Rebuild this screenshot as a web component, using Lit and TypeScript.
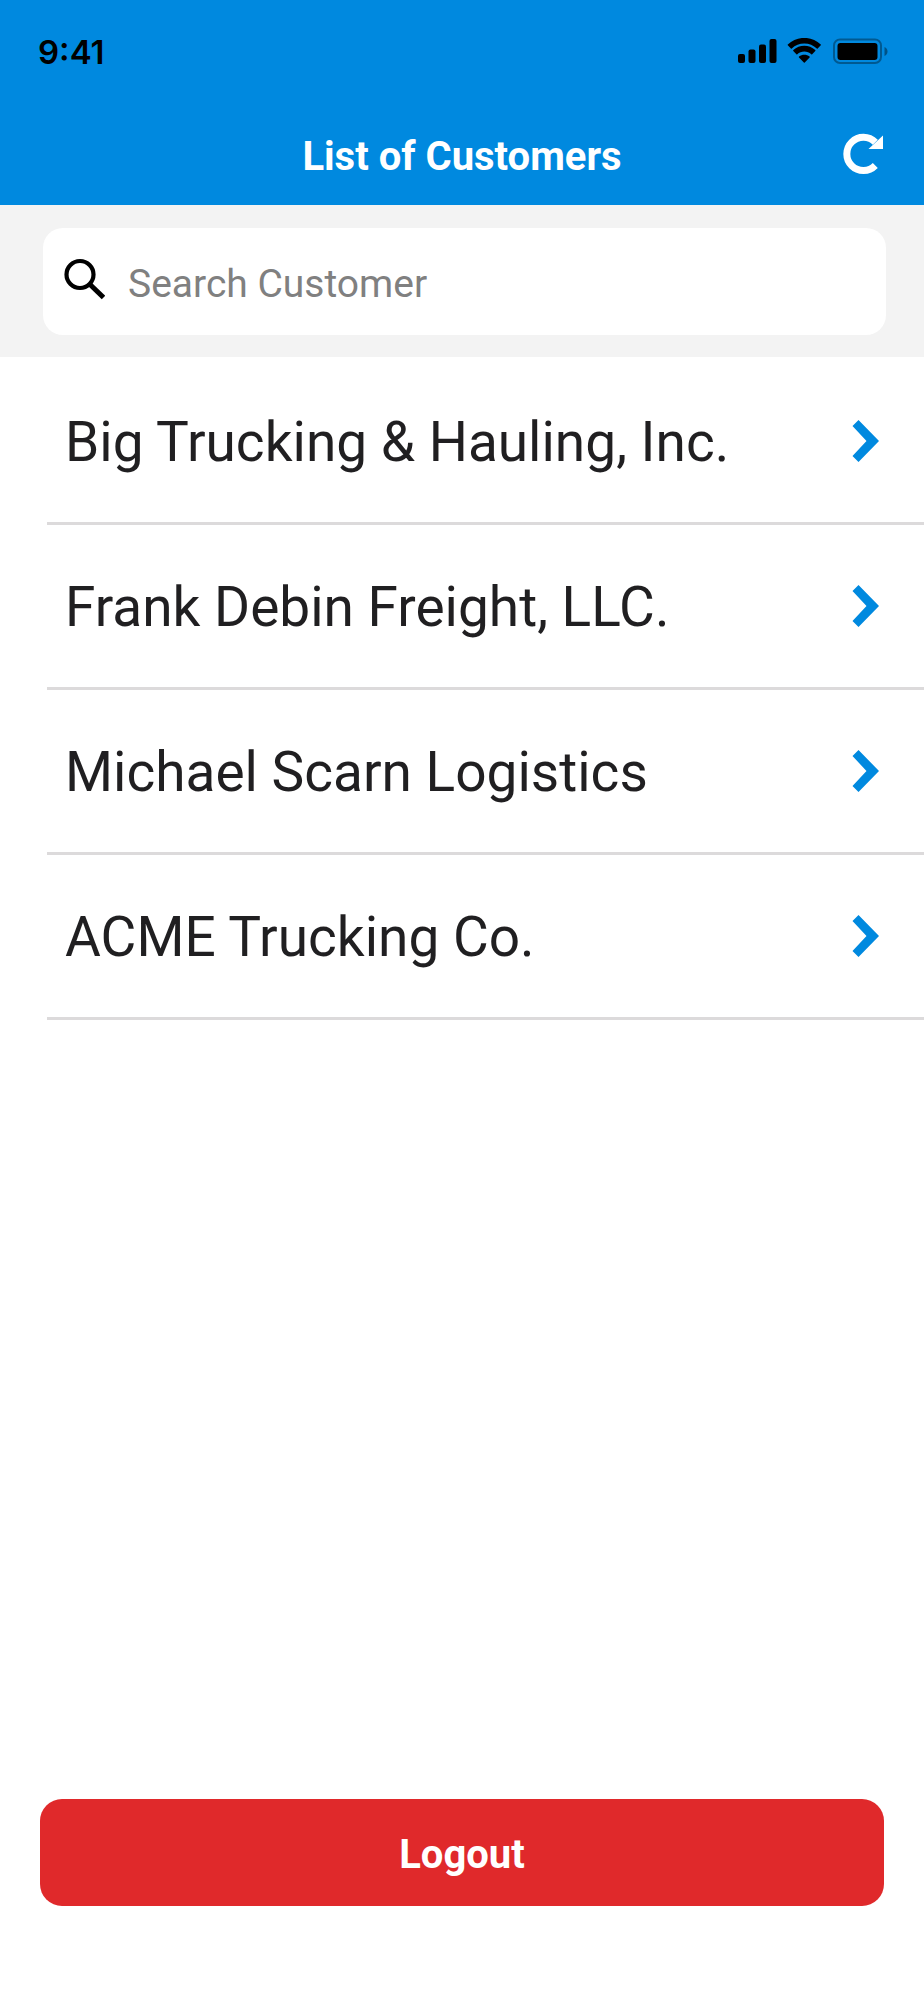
import { LitElement, html, css } from "lit";
import { customElement, state } from "lit/decorators.js";

const CUSTOMERS = [
  "Big Trucking & Hauling, Inc.",
  "Frank Debin Freight, LLC.",
  "Michael Scarn Logistics",
  "ACME Trucking Co.",
];

@customElement("status-bar")
class StatusBar extends LitElement {
  static styles = css`
    :host {
      display: flex;
      justify-content: space-between;
      align-items: center;
      height: 102px;
      padding: 0 36px 0 38px;
      color: #000;
    }
    .time {
      padding-top: 2px;
      font: 600 33px/40px Inter, sans-serif;
    }
    .icons {
      display: flex;
      align-items: center;
      gap: 10px;
    }
    svg {
      display: block;
    }
  `;

  render() {
    return html`
      <span class="time">9:41</span>
      <span class="icons">
        <svg width="39" height="26" viewBox="0 0 39 26" aria-hidden="true">
          <rect x="0" y="16" width="7" height="9" rx="2" />
          <rect x="10.5" y="11.5" width="7" height="13.5" rx="2" />
          <rect x="21" y="6.5" width="7" height="18.5" rx="2" />
          <rect x="31.5" y="1" width="7" height="24" rx="2" />
        </svg>
        <svg width="35" height="26" viewBox="0 0 35 26" aria-hidden="true">
          <path d="M17.3 5.5c4.8 0 9.2 1.9 12.500 5 .25.24.64.23.88 0l3.1-3.2c.26-.25.26-.66 0-.9C24.5-2.3 10.1-2.3.8 6.4c-.26.25-.26.65 0 .9l3.1 3.2c.24.24.64.24.88 0 3.4-3.2 7.8-5 12.5-5z" />
          <path d="M17.3 13.5c2.6 0 5.1 1 7 2.7.26.24.66.24.9 0l3.1-3.2c.26-.25.25-.67 0-.91-6.2-5.8-15.8-5.8-22 0-.26.24-.26.66 0 .91l3.1 3.2c.25.24.65.24.9 0 1.9-1.7 4.4-2.7 7-2.7z" />
          <path d="M22.6 18.6c.25.25.25.65 0 .9l-4.85 5.1a.64.64 0 0 1-.9 0L12 19.5c-.26-.25-.25-.67.03-.9 3.06-2.4 7.5-2.4 10.57 0z" />
        </svg>
        <svg width="56" height="26" viewBox="0 0 56 26" aria-hidden="true">
          <rect x="2" y="1.5" width="47" height="23.5" rx="6" fill="none" stroke="#000" stroke-opacity=".35" stroke-width="2" />
          <rect x="5.5" y="5" width="40" height="17" rx="3" />
          <path d="M52.5 9v9c1.8-.8 3-2.5 3-4.500s-1.2-3.7-3-4.500z" fill-opacity=".4" />
        </svg>
      </span>
    `;
  }
}

@customElement("customer-row")
class CustomerRow extends LitElement {
  static properties = { name: { type: String } };
  declare name: string;

  static styles = css`
    :host {
      display: block;
    }
    .link {
      display: flex;
      align-items: center;
      justify-content: space-between;
      min-height: 162px;
      padding: 0 45px 0 18px;
      border-bottom: 3px solid #dcdadb;
      color: #201f21;
      text-decoration: none;
      font-size: 55px;
      line-height: 64px;
    }
    .name {
      padding-top: 2px;
    }
    .chevron {
      display: block;
      flex: none;
    }
  `;

  render() {
    return html`
      <a class="link" href="#">
        <span class="name">${this.name}</span>
        <svg class="chevron" width="27" height="42" viewBox="0 0 27 42" aria-hidden="true">
          <path d="M6.5 0 27 21 6.5 42 .5 36 14.500 21 .5 6z" fill="#0089df" />
        </svg>
      </a>
    `;
  }
}

@customElement("app-root")
class AppRoot extends LitElement {
  @state() private query = "";

  static styles = css`
    :host {
      display: flex;
      flex-direction: column;
      min-height: 100vh;
      background: #fff;
      font-family: Roboto, sans-serif;
    }
    .header {
      background: #0089df;
      color: #fff;
    }
    .titlebar {
      display: grid;
      grid-template-columns: 1fr auto 1fr;
      align-items: center;
      height: 103px;
      padding: 0 40px;
    }
    .title {
      grid-column: 2;
      margin: 0;
      padding-top: 6px;
      font-size: 40px;
      font-weight: 700;
      line-height: 48px;
    }
    .refresh {
      justify-self: end;
      padding: 0;
      border: 0;
      background: none;
      color: inherit;
    }
    .refresh svg,
    .search-icon {
      display: block;
      flex: none;
    }
    .search {
      padding: 23px 38px 22px 43px;
      background: #f3f3f3;
    }
    .field {
      display: flex;
      align-items: center;
      gap: 23px;
      height: 107px;
      padding: 0 22px 0 21px;
      border-radius: 20px;
      background: #fff;
    }
    .input {
      flex: 1;
      min-width: 0;
      padding: 4px 0 0;
      border: 0;
      outline: 0;
      background: none;
      color: #201f21;
      font: 400 39px/48px Roboto, sans-serif;
    }
    .input::placeholder {
      color: #808080;
      opacity: 1;
    }
    .list {
      flex: 1;
      margin: 0;
      padding: 3px 0 0 47px;
      list-style: none;
    }
    .footer {
      display: flex;
      padding: 40px 40px 94px;
    }
    .logout {
      flex: 1;
      height: 107px;
      padding: 4px 0 0;
      border: 0;
      border-radius: 22px;
      background: #e0292b;
      color: #fff;
      font: 700 40px/48px Roboto, sans-serif;
    }
  `;

  render() {
    const needle = this.query.trim().toLowerCase();
    const shown = CUSTOMERS.filter((name) => name.toLowerCase().includes(needle));
    return html`
      <header class="header">
        <status-bar></status-bar>
        <div class="titlebar">
          <h1 class="title">List of Customers</h1>
          <button class="refresh" type="button" aria-label="Refresh">
            <svg width="41" height="42" viewBox="0 0 41 42" aria-hidden="true">
              <path d="M32.3 32.5A16.6 16.6 0 1 1 32.3 9.3" fill="none" stroke="#fff" stroke-width="7" />
              <path d="M40 2.5V16H25.5z" fill="#fff" />
            </svg>
          </button>
        </div>
      </header>
      <div class="search">
        <label class="field">
          <svg class="search-icon" width="41" height="48" viewBox="0 0 41 48" aria-hidden="true">
            <circle cx="16" cy="16.5" r="13.5" fill="none" stroke="#000" stroke-width="4.2" />
            <path d="M25.5 26 39.500 39.500" fill="none" stroke="#000" stroke-width="5" />
          </svg>
          <input
            class="input"
            type="text"
            aria-label="Search Customer"
            placeholder="Search Customer"
            .value=${this.query}
            @input=${(e: Event) => (this.query = (e.target as HTMLInputElement).value)}
          />
        </label>
      </div>
      <ul class="list">
        ${shown.map((name) => html`<li><customer-row .name=${name}></customer-row></li>`)}
      </ul>
      <footer class="footer">
        <button class="logout" type="button">Logout</button>
      </footer>
    `;
  }
}
